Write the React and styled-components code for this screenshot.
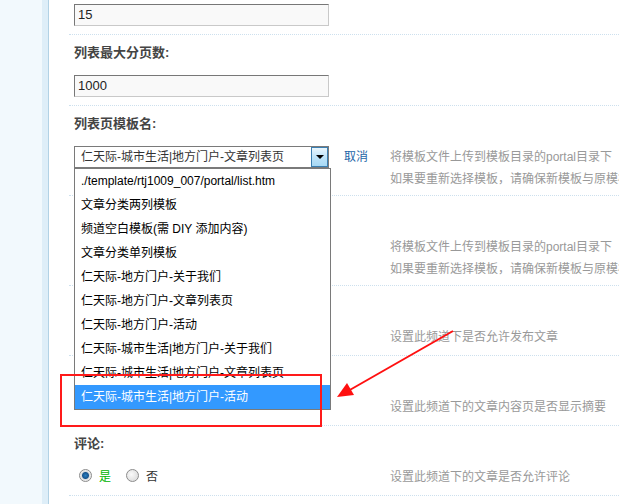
import React from 'react'
import styled, { createGlobalStyle } from 'styled-components'

const GlobalStyle = createGlobalStyle`
  html, body {
    margin: 0;
    padding: 0;
    overflow: hidden;
    background: #fff;
  }
  body {
    font-family: "Liberation Sans", "Noto Sans CJK SC", sans-serif;
    font-size: 12px;
    color: #333;
  }
`

const Page = styled.div`
  display: flex;
  height: 504px;
  position: relative;
  overflow: hidden;
`

const Sidebar = styled.div`
  width: 42px;
  flex: 0 0 42px;
  background: #f2f9fd;
`

const SideStrip = styled.div`
  width: 6px;
  flex: 0 0 6px;
  background: #deeef8;
  border-right: 1px solid #b2d2e5;
`

const Main = styled.div`
  flex: 1;
  padding-left: 20px;
  overflow: hidden;
`

const Table = styled.div`
  width: 760px;
`

const LabelRow = styled.div`
  height: 35px;
  box-sizing: border-box;
  padding: 9px 0 0 5px;
  line-height: 18px;
  font-size: 13px;
  font-weight: bold;
  color: #444;
`

const ValueRow = styled.div`
  display: flex;
  align-items: flex-start;
  padding: ${(p) => (p.$first ? '4px' : '5px')} 0 5px;
  border-bottom: 1px dotted #cde0ee;
`

const FieldCell = styled.div`
  width: 316px;
  flex: 0 0 316px;
  box-sizing: border-box;
  padding-left: 5px;
  min-height: 24px;
  display: flex;
  align-items: flex-start;
`

const Desc = styled.div`
  padding-left: 5px;
  color: #999;
  line-height: 22px;
  white-space: nowrap;
`

const TextInput = styled.div`
  width: 255px;
  height: 22px;
  margin-bottom: 3px;
  box-sizing: border-box;
  border: 1px solid;
  border-color: #777 #c9c9c9 #c9c9c9 #777;
  background: #f9f9f9;
  padding: 0 3px;
  font-size: 13px;
  line-height: 20px;
  color: #222;
`

const SelectBox = styled.div`
  position: relative;
  width: 255px;
  height: 22px;
  box-sizing: border-box;
  border: 1px solid #7a7a7a;
  background: #fff;
  padding-left: 6px;
  line-height: 20px;
  color: #333;
  white-space: nowrap;
`

const SelectButton = styled.span`
  position: absolute;
  right: 0;
  top: 0;
  width: 15px;
  height: 18px;
  border: 1px solid #3c7fb1;
  background: linear-gradient(#eaf6fd, #bfe4f9 50%, #a7d9f5);
  display: flex;
  align-items: center;
  justify-content: center;

  &::after {
    content: '';
    border-left: 4px solid transparent;
    border-right: 4px solid transparent;
    border-top: 4px solid #000;
  }
`

const OptionList = styled.ul`
  position: absolute;
  left: -1px;
  top: 21px;
  width: 255px;
  margin: 0;
  padding: 0;
  list-style: none;
  border: 1px solid #7a7a7a;
  background: #fff;
  z-index: 5;
`

const Option = styled.li`
  height: 24px;
  line-height: 24px;
  padding-left: 6px;
  color: ${(p) => (p.$active ? '#fff' : '#000')};
  background: ${(p) => (p.$active ? '#3399ff' : '#fff')};
  white-space: nowrap;
`

const CancelLink = styled.a`
  margin-left: 15px;
  line-height: 22px;
  color: #2366a8;
  text-decoration: none;
`

const RadioGroup = styled.div`
  display: flex;
  align-items: center;
  height: 18px;
  padding-left: 5px;
`

const RadioItem = styled.label`
  display: flex;
  align-items: center;
  gap: 7px;
  margin-right: 15px;
  color: ${(p) => (p.$checked ? '#00b400' : '#333')};
`

const RadioDot = styled.span`
  width: 11px;
  height: 11px;
  border-radius: 50%;
  border: 1px solid #8c8c8c;
  background: ${(p) =>
    p.$checked
      ? 'radial-gradient(circle, #2b7fc0 0, #17558f 3px, #dcdcdc 4px, #f6f6f6 6px)'
      : 'radial-gradient(circle at 40% 40%, #fafafa 0, #e2e2e2 6px)'};
`

const Annotation = styled.svg`
  position: absolute;
  left: 0;
  top: 0;
  pointer-events: none;
  z-index: 10;
`

const templates = [
  './template/rtj1009_007/portal/list.htm',
  '文章分类两列模板',
  '频道空白模板(需 DIY 添加内容)',
  '文章分类单列模板',
  '仁天际-地方门户-关于我们',
  '仁天际-地方门户-文章列表页',
  '仁天际-地方门户-活动',
  '仁天际-城市生活|地方门户-关于我们',
  '仁天际-城市生活|地方门户-文章列表页',
  '仁天际-城市生活|地方门户-活动',
]

const templateHelp = (
  <>
    将模板文件上传到模板目录的portal目录下
    <br />
    如果要重新选择模板，请确保新模板与原模板
  </>
)

const Radios = ({ yes = true }) => (
  <RadioGroup>
    <RadioItem $checked={yes}>
      <RadioDot $checked={yes} />是
    </RadioItem>
    <RadioItem $checked={!yes}>
      <RadioDot $checked={!yes} />否
    </RadioItem>
  </RadioGroup>
)

export default function App() {
  return (
    <>
      <GlobalStyle />
      <Page>
        <Sidebar />
        <SideStrip />
        <Main>
          <Table>
            <ValueRow $first>
              <FieldCell>
                <TextInput>15</TextInput>
              </FieldCell>
              <Desc />
            </ValueRow>

            <LabelRow>列表最大分页数:</LabelRow>
            <ValueRow>
              <FieldCell>
                <TextInput>1000</TextInput>
              </FieldCell>
              <Desc />
            </ValueRow>

            <LabelRow>列表页模板名:</LabelRow>
            <ValueRow>
              <FieldCell>
                <SelectBox>
                  仁天际-城市生活|地方门户-文章列表页
                  <SelectButton />
                  <OptionList>
                    {templates.map((t, i) => (
                      <Option key={t} $active={i === templates.length - 1}>
                        {t}
                      </Option>
                    ))}
                  </OptionList>
                </SelectBox>
                <CancelLink href="#">取消</CancelLink>
              </FieldCell>
              <Desc>{templateHelp}</Desc>
            </ValueRow>

            {/* rows below are covered by the open option list */}
            <LabelRow />
            <ValueRow>
              <FieldCell />
              <Desc>{templateHelp}</Desc>
            </ValueRow>

            <LabelRow />
            <ValueRow>
              <FieldCell />
              <Desc>设置此频道下是否允许发布文章</Desc>
            </ValueRow>

            <LabelRow />
            <ValueRow>
              <FieldCell />
              <Desc>设置此频道下的文章内容页是否显示摘要</Desc>
            </ValueRow>

            <LabelRow>评论:</LabelRow>
            <ValueRow>
              <FieldCell>
                <Radios />
              </FieldCell>
              <Desc>设置此频道下的文章是否允许评论</Desc>
            </ValueRow>
          </Table>
        </Main>

        <Annotation width="619" height="504" viewBox="0 0 619 504">
          <rect x="61" y="375" width="260" height="51" fill="none" stroke="#ff1a1a" strokeWidth="2" />
          <line x1="453" y1="331" x2="348" y2="391" stroke="#ff1010" strokeWidth="2" />
          <polygon points="337,397 354,395 347,383" fill="#ff1010" />
        </Annotation>
      </Page>
    </>
  )
}
